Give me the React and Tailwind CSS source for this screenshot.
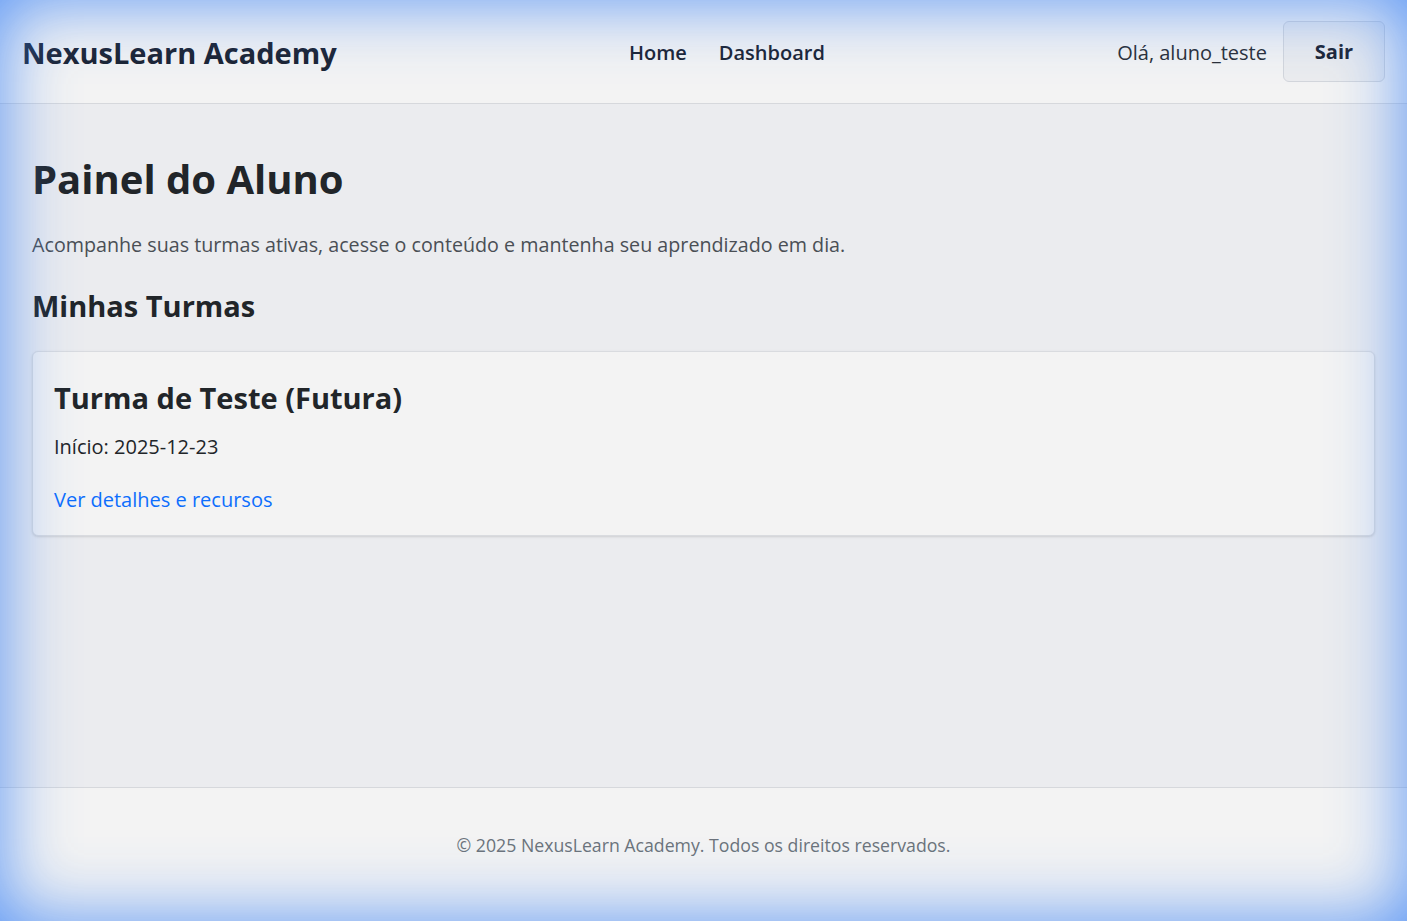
export default function App() {
  return (
    <div
      className="relative min-h-screen flex flex-col bg-[#ebecef] text-[#212529]"
      style={{ fontFamily: '"Open Sans", "Noto Sans", sans-serif' }}
    >
      <header className="h-[104px] flex items-center justify-between px-[22px] bg-[#f3f3f3] border-b border-[#d6d8dc]">
        <a className="pt-[3px] text-[29px] font-bold text-[#1c2433]">NexusLearn Academy</a>
        <nav className="flex items-center gap-8 pt-[2px] text-[20px] font-semibold text-[#1c2433]">
          <a>Home</a>
          <a>Dashboard</a>
        </nav>
        <div className="flex items-center gap-4">
          <span className="pt-[2px] text-[20px] text-[#2a2f36]">Olá, aluno_teste</span>
          <button className="w-[102px] h-[61px] rounded-md border border-[#d3d6db] bg-[#ebecee] text-[20px] font-bold text-[#1c2433]">
            Sair
          </button>
        </div>
      </header>

      <main className="flex-1 px-8 pt-[50px]">
        <h1 className="text-[40px] font-bold leading-tight text-[#212529]">Painel do Aluno</h1>
        <p className="mt-[26px] text-[19.7px] text-[#4a4f55]">
          Acompanhe suas turmas ativas, acesse o conteúdo e mantenha seu aprendizado em dia.
        </p>
        <h2 className="mt-[28px] text-[29px] font-bold leading-tight text-[#212529]">Minhas Turmas</h2>

        <div className="mt-[27px] rounded-md border border-[#d9dbdf] bg-[#f3f3f3] shadow-sm px-[21px] pt-[28px] pb-[20px]">
          <h3 className="text-[29px] font-bold leading-tight text-[#212529]">Turma de Teste (Futura)</h3>
          <p className="mt-[16px] text-[20px] text-[#212529]">Início: 2025-12-23</p>
          <a className="block mt-[23px] text-[20px] font-medium text-[#0d6efd]">Ver detalhes e recursos</a>
        </div>
      </main>

      <footer className="h-[134px] bg-[#f3f3f3] border-t border-[#d6d8dc] flex justify-center pt-[44px]">
        <p className="text-[17.7px] text-[#6c737b]">© 2025 NexusLearn Academy. Todos os direitos reservados.</p>
      </footer>

      <div className="pointer-events-none fixed inset-0 shadow-[inset_0_0_70px_rgba(59,130,246,0.85)]" />
    </div>
  )
}
